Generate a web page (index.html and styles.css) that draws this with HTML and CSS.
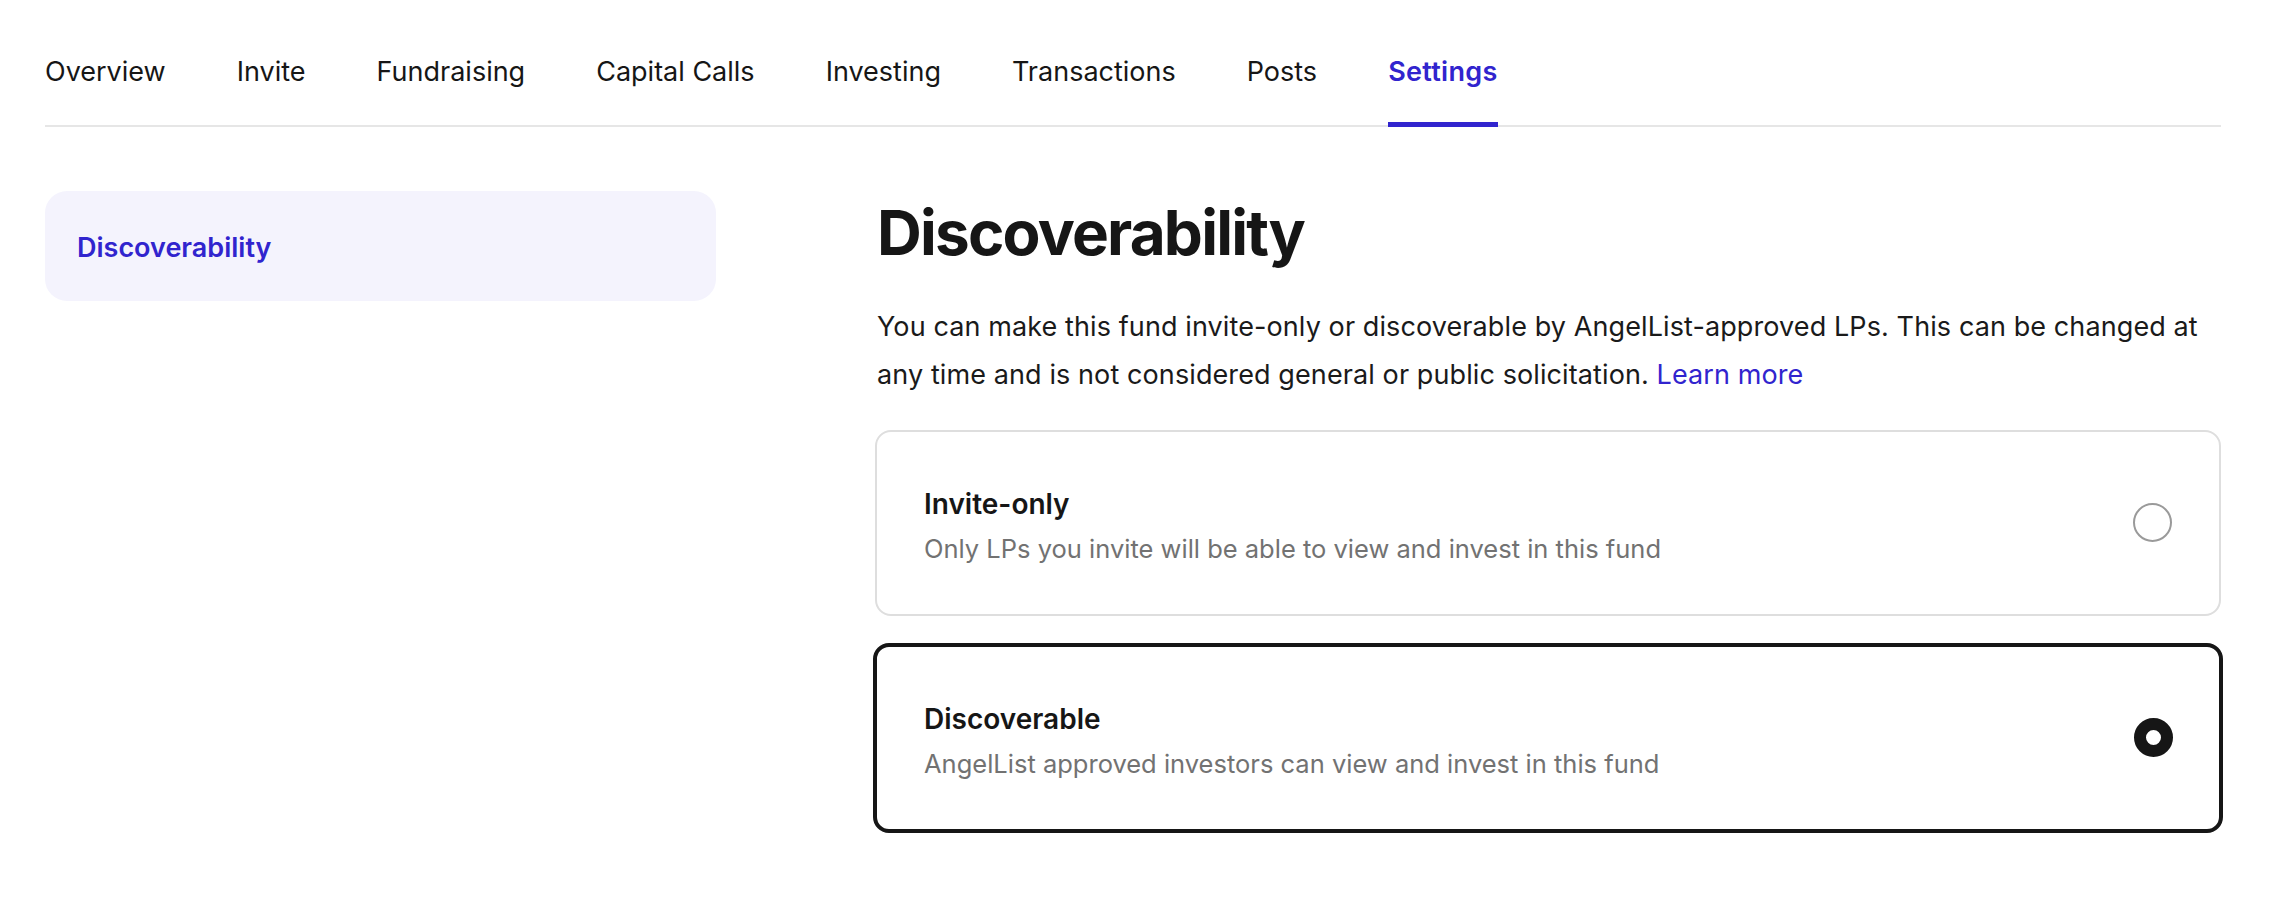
FILE: index.html
```html
<!DOCTYPE html>
<html lang="en">
<head>
<meta charset="utf-8">
<title>Settings – Discoverability</title>
<link rel="stylesheet" href="styles.css">
</head>
<body>
<div class="page">
  <nav class="tabs">
    <a class="tab">Overview</a>
    <a class="tab">Invite</a>
    <a class="tab">Fundraising</a>
    <a class="tab">Capital Calls</a>
    <a class="tab">Investing</a>
    <a class="tab">Transactions</a>
    <a class="tab">Posts</a>
    <a class="tab tab-active">Settings</a>
  </nav>
  <div class="layout">
    <aside class="sidebar">
      <div class="side-item">Discoverability</div>
    </aside>
    <main class="content">
      <h1 class="title">Discoverability</h1>
      <p class="lead">You can make this fund invite-only or discoverable by AngelList-approved LPs. This can be changed at any time and is not considered general or public solicitation. <a class="link">Learn more</a></p>
      <div class="options">
        <div class="option">
          <div class="option-text">
            <div class="option-title">Invite-only</div>
            <div class="option-desc">Only LPs you invite will be able to view and invest in this fund</div>
          </div>
          <span class="radio"></span>
        </div>
        <div class="option option-selected">
          <div class="option-text">
            <div class="option-title">Discoverable</div>
            <div class="option-desc">AngelList approved investors can view and invest in this fund</div>
          </div>
          <span class="radio radio-on"></span>
        </div>
      </div>
    </main>
  </div>
</div>
</body>
</html>
```
FILE: styles.css
```css
* { box-sizing: border-box; }
html, body { margin: 0; background: #ffffff; }
body {
  font-family: Inter, "Noto Sans", "Liberation Sans", sans-serif;
  color: #161616;
  -webkit-font-smoothing: antialiased;
}
.page {
  padding: 0 51px 0 45px;
}
.tabs {
  display: flex;
  gap: 71px;
  border-bottom: 2px solid #e6e6e6;
}
.tab {
  position: relative;
  display: block;
  font-size: 27px;
  line-height: 40px;
  padding: 52px 0 33px;
  color: #161616;
  cursor: pointer;
}
.tab-active {
  color: #3124ce;
  font-weight: 600;
  letter-spacing: 0.3px;
}
.tab-active::after {
  content: "";
  position: absolute;
  left: 0;
  right: 0;
  bottom: -2px;
  height: 5px;
  background: #3124ce;
}
.layout {
  display: grid;
  grid-template-columns: 671px 1fr;
  column-gap: 159px;
  margin-top: 64px;
}
.side-item {
  height: 110px;
  display: flex;
  align-items: center;
  padding: 2px 32px 0;
  background: #f4f3fd;
  border-radius: 22px;
  color: #3124ce;
  font-size: 27px;
  font-weight: 600;
}
.content { min-width: 0; }
.title {
  margin: 3px 0 0 2px;
  font-size: 62px;
  line-height: 77px;
  font-weight: 700;
  letter-spacing: -1.8px;
  color: #161616;
}
.lead {
  margin: 32px 0 0 2px;
  font-size: 27px;
  line-height: 48px;
  letter-spacing: 0.1px;
  color: #1a1a1a;
}
.link { color: #3124ce; cursor: pointer; }
.options {
  display: flex;
  flex-direction: column;
  gap: 27px;
  margin-top: 31px;
}
.option {
  display: flex;
  align-items: center;
  justify-content: space-between;
  border: 2px solid #dedede;
  border-radius: 16px;
  padding: 52px 47px 45px 47px;
}
.option-selected {
  border: 4px solid #161616;
  margin: 0 -2px;
  padding-left: 47px;
  padding-right: 46px;
}
.option-title {
  font-size: 28px;
  line-height: 40px;
  font-weight: 600;
  color: #161616;
}
.option-desc {
  margin-top: 5px;
  font-size: 25.5px;
  line-height: 40px;
  color: #727272;
}
.radio {
  width: 39px;
  height: 39px;
  border-radius: 50%;
  border: 2px solid #9a9a9a;
  background: #fff;
  flex: none;
  margin-top: -8px;
}
.radio-on {
  border: 12px solid #161616;
}
```
